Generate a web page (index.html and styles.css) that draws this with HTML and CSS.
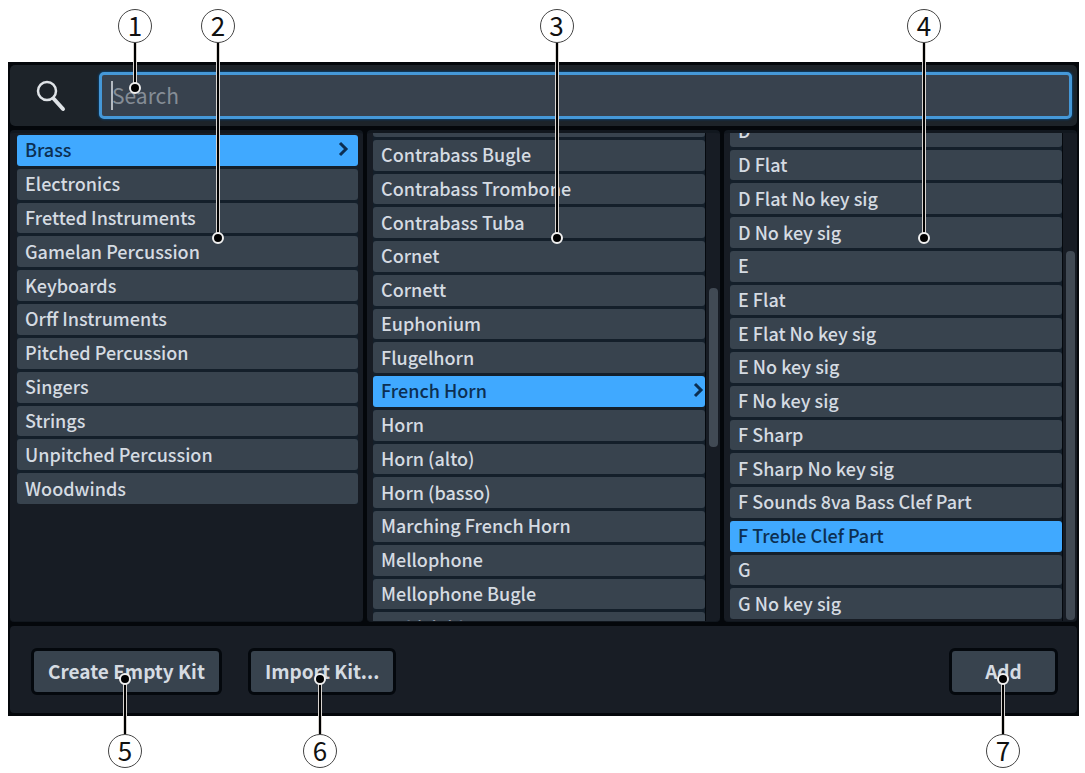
FILE: index.html
```html
<!DOCTYPE html>
<html lang="en">
<head>
    <meta charset="UTF-8">
    <meta name="viewport" content="width=device-width, initial-scale=1.0">
    <title>Instrument Picker</title>
    <link rel="stylesheet" href="styles.css">
</head>
<body>

    <div class="figure">
        <div class="picker">

            <div class="search-bar">
                <label for="search" aria-label="Search instruments">
                    <svg class="search-icon" viewBox="0 0 32 32" width="32" height="32">
                        <circle cx="12" cy="11" r="9" fill="none" stroke="#dfe3e7" stroke-width="2.5"/>
                        <path d="M18.5 18.5L28 29" stroke="#dfe3e7" stroke-width="4" stroke-linecap="round"/>
                    </svg>
                </label>
                <div class="search-field">
                    <input type="text" id="search" placeholder="Search">
                    <span class="caret"></span>
                </div>
            </div>

            <div class="columns">
                <div class="panel families">
                    <div class="list">
                        <button class="selected">Brass
                            <svg class="chevron" viewBox="0 0 12 18" width="12" height="18"><path d="M2 3L8 9L2 15"/></svg>
                        </button>
                        <button>Electronics</button>
                        <button>Fretted Instruments</button>
                        <button>Gamelan Percussion</button>
                        <button>Keyboards</button>
                        <button>Orff Instruments</button>
                        <button>Pitched Percussion</button>
                        <button>Singers</button>
                        <button>Strings</button>
                        <button>Unpitched Percussion</button>
                        <button>Woodwinds</button>
                    </div>
                </div>

                <div class="panel instruments">
                    <div class="list">
                        <button></button>
                        <button>Contrabass Bugle</button>
                        <button>Contrabass Trombone</button>
                        <button>Contrabass Tuba</button>
                        <button>Cornet</button>
                        <button>Cornett</button>
                        <button>Euphonium</button>
                        <button>Flugelhorn</button>
                        <button class="selected">French Horn
                            <svg class="chevron" viewBox="0 0 12 18" width="12" height="18"><path d="M2 3L8 9L2 15"/></svg>
                        </button>
                        <button>Horn</button>
                        <button>Horn (alto)</button>
                        <button>Horn (basso)</button>
                        <button>Marching French Horn</button>
                        <button>Mellophone</button>
                        <button>Mellophone Bugle</button>
                        <button>Ophicleide</button>
                    </div>
                    <div class="scrollbar"><div class="thumb"></div></div>
                </div>

                <div class="panel types">
                    <div class="list">
                        <button>D</button>
                        <button>D Flat</button>
                        <button>D Flat No key sig</button>
                        <button>D No key sig</button>
                        <button>E</button>
                        <button>E Flat</button>
                        <button>E Flat No key sig</button>
                        <button>E No key sig</button>
                        <button>F No key sig</button>
                        <button>F Sharp</button>
                        <button>F Sharp No key sig</button>
                        <button>F Sounds 8va Bass Clef Part</button>
                        <button class="selected">F Treble Clef Part</button>
                        <button>G</button>
                        <button>G No key sig</button>
                    </div>
                    <div class="scrollbar"><div class="thumb"></div></div>
                </div>
            </div>

            <div class="actions">
                <button>Create Empty Kit</button>
                <button>Import Kit...</button>
                <button class="add">Add</button>
            </div>
        </div>

        <!-- Numbered callouts -->
        <div class="callout top c1"><span class="number">1</span><span class="line"></span></div>
        <div class="callout top c2"><span class="number">2</span><span class="line"></span></div>
        <div class="callout top c3"><span class="number">3</span><span class="line"></span></div>
        <div class="callout top c4"><span class="number">4</span><span class="line"></span></div>
        <div class="callout bottom c5"><span class="line"></span><span class="number">5</span></div>
        <div class="callout bottom c6"><span class="line"></span><span class="number">6</span></div>
        <div class="callout bottom c7"><span class="line"></span><span class="number">7</span></div>
    </div>

</body>
</html>
```
FILE: styles.css
```css
* {
    box-sizing: border-box;
}

body {
    margin: 0;
    background-color: #fff;
    font-family: "Noto Sans CJK SC", "Noto Sans", sans-serif;
    font-size: 18px;
    font-weight: 500;
    color: #d5dbe2;
}

button, input {
    font: inherit;
    color: inherit;
}

.figure {
    position: relative;
    padding: 62px 6px 56px 8px;
}

.picker {
    background-color: #04070b;
    padding: 3px 2px;
}

.search-bar {
    display: flex;
    align-items: center;
    height: 61px;
    padding: 0 5px 0 25px;
    border-radius: 5px;
    background-color: #1d2329;
}

.search-bar label {
    display: flex;
    width: 64px;
}

.search-field {
    position: relative;
    flex: 1;
}

.search-field input {
    display: block;
    width: 100%;
    height: 47px;
    padding: 0 10px 2px;
    border: 3px solid #4598d8;
    border-radius: 5px;
    background-color: #38424e;
    box-shadow: 0 0 2px 1px #0d3c63;
    font-size: 21px;
    font-weight: normal;
    outline: none;
}

.search-field input::placeholder {
    color: #858d96;
    opacity: 1;
}

.caret {
    position: absolute;
    left: 12px;
    top: 9px;
    width: 2px;
    height: 29px;
    background-color: #b4bac1;
}

.columns {
    display: grid;
    grid-template-columns: repeat(3, 1fr);
    gap: 4px;
    margin: 4px 0;
}

.panel {
    position: relative;
    height: 492px;
    overflow: hidden;
    border-top: 3px solid #11171e;
    border-bottom: 1px solid #11171e;
    border-radius: 4px;
    background-color: #171c24;
    padding: 0 15px 0 6px;
}

.list {
    display: grid;
    grid-auto-rows: 1fr;
    gap: 3px;
    background-color: #141f2a;
}

.list button {
    display: flex;
    align-items: center;
    justify-content: space-between;
    min-height: 0;
    padding: 0 8px 2px;
    border: none;
    border-radius: 3px;
    background-color: #38434e;
    line-height: 28px;
    text-align: left;
    white-space: nowrap;
    cursor: pointer;
}

.list .selected {
    background-color: #40a9ff;
    color: #0c2f52;
}

.chevron path {
    fill: none;
    stroke: #0c2f52;
    stroke-width: 3;
}

.families {
    padding: 2px 5px 0 7px;
}

.families .list {
    height: 369px;
}

.instruments .list {
    height: 537px;
    margin-top: -27px;
}

.instruments .selected {
    padding-right: 0;
}

.types .list {
    height: 503px;
    margin-top: -17px;
}

.scrollbar {
    position: absolute;
    top: 0;
    right: 0;
    bottom: 0;
    width: 15px;
    padding: 0 2px 0 3px;
    border-left: 1px solid #05090e;
}

.thumb {
    border-radius: 4px;
    background-color: #414a54;
}

.instruments .thumb {
    height: 159px;
    margin-top: 155px;
}

.types .thumb {
    height: 369px;
    margin-top: 118px;
}

.actions {
    display: flex;
    align-items: center;
    gap: 26px;
    height: 87px;
    padding: 4px 19px 0 21px;
    border-radius: 4px;
    background-color: #181d25;
}

.actions button {
    height: 47px;
    padding: 0 14px 2px;
    border: 3px solid #04080d;
    border-radius: 6px;
    background-color: #38434e;
    font-size: 19px;
    font-weight: bold;
    line-height: 30px;
    cursor: pointer;
}

.actions .add {
    width: 109px;
    margin-left: auto;
}

/* callouts lie over the dialog */
.callout {
    position: absolute;
    display: flex;
    flex-direction: column;
    align-items: center;
    width: 34px;
    color: #111;
    font-weight: normal;
    pointer-events: none;
}

.number {
    width: 34px;
    height: 34px;
    border: 1px solid #444;
    border-radius: 50%;
    background-color: #fff;
    font-size: 26px;
    line-height: 30px;
    text-align: center;
}

.line {
    position: relative;
    flex: 1;
    width: 4px;
    border: 1px solid #d8d4d0;
    border-width: 0 1px;
    background-color: #000;
}

/* dot at the far end of the line */
.line::after {
    content: "";
    position: absolute;
    left: -5px;
    width: 8px;
    height: 8px;
    border: 2px solid #f0f0f0;
    border-radius: 50%;
    background-color: #000;
}

.top {
    top: 9px;
    height: 229px;
}

.top .line::after {
    bottom: -6px;
}

.bottom {
    bottom: 4px;
    height: 89px;
}

.bottom .line::after {
    top: -6px;
}

.c1 {
    left: 118px;
    height: 79px;
}

.c2 {
    left: 201px;
}

.c3 {
    left: calc(50% - 3px);
}

.c4 {
    right: 144px;
}

.c5 {
    left: 108px;
}

.c6 {
    left: 303px;
}

.c7 {
    right: 65px;
}
```
